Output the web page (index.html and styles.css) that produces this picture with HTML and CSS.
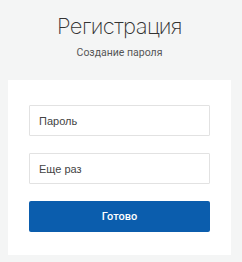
FILE: index.html
```html
<!DOCTYPE html>
<html lang="ru">
<head>
  <meta charset="UTF-8" />
  <meta name="viewport" content="width=device-width, initial-scale=1.0"/>
  <title>Регистрация</title>
  <link rel="stylesheet" href="styles.css">
</head>
<body>

  <div class="header">
    <h1>Регистрация</h1>
    <p class="subtitle">Создание пароля</p>
  </div>

  <div class="card">
    <input type="password" placeholder="Пароль" />
    <input type="password" placeholder="Еще раз" />
    <button>Готово</button>
  </div>

</body>
</html>
```

FILE: styles.css
```css
* {
  margin: 0;
  padding: 0;
  box-sizing: border-box;
}

body {
  font-family: Roboto, 'Open Sans', sans-serif;
  background: #f4f5f5;
  padding: 0 11px 0 8px;
}

.header {
  text-align: center;
  padding-top: 12px;
}

h1 {
  font-family: Inter, Roboto, sans-serif;
  font-weight: 200;
  font-size: 22px;
  line-height: 28px;
  letter-spacing: -0.6px;
  color: #333;
}

.subtitle {
  font-size: 10.5px;
  line-height: 16px;
  margin-top: 5px;
  color: #555;
}

.card {
  background: #fff;
  margin-top: 19px;
  padding: 25px 21px 23px 21px;
  display: flex;
  flex-direction: column;
  gap: 17px;
}

input {
  height: 31px;
  border: 1px solid #e2e2e2;
  border-radius: 1px;
  padding: 0 9px;
  font-family: 'Liberation Sans', Arial, sans-serif;
  font-size: 11px;
}

input::placeholder {
  color: #444;
}

button {
  height: 31px;
  background: #0b5dad;
  color: white;
  border: none;
  border-radius: 2px;
  font-family: Roboto, sans-serif;
  font-weight: 500;
  font-size: 11px;
}
```
